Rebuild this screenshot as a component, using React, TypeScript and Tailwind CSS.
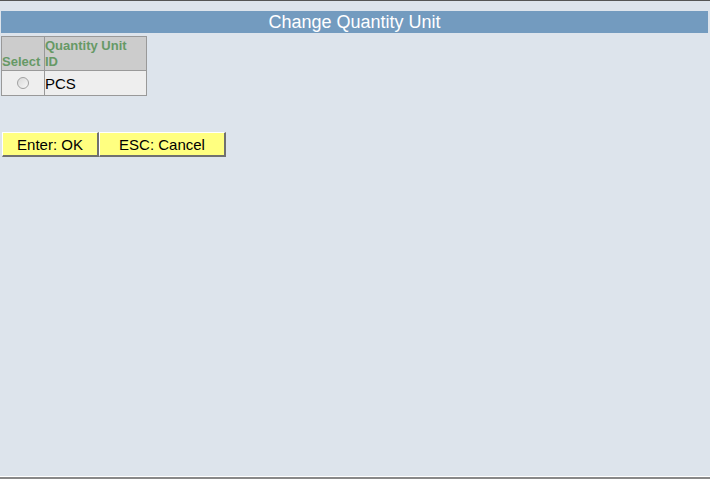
import React from "react";

export default function App() {
  return (
    <div
      className="flex h-[479px] w-[710px] flex-col bg-[#dde4ec] text-black"
      style={{ fontFamily: '"Liberation Sans", Arial, sans-serif' }}
    >
      <div className="h-px w-full bg-[#555555]" />
      <div className="flex flex-1 flex-col pl-px pr-[2px] pt-[10px]">
        <div className="flex h-[22px] w-full items-center justify-center bg-[#739bbf] text-[18px] leading-none text-white">
          Change Quantity Unit
        </div>
        <table className="mt-[3px] w-[146px] border-collapse border border-[#999999] text-left">
          <thead>
            <tr className="h-[34px] bg-[#cccccc]">
              <th className="w-[43px] border border-[#999999] p-0 align-bottom text-[13px] font-bold leading-[16px] text-[#669966]">
                Select
              </th>
              <th className="border border-[#999999] p-0 align-bottom text-[13px] font-bold leading-[16px] text-[#669966]">
                Quantity Unit
                <br />
                ID
              </th>
            </tr>
          </thead>
          <tbody>
            <tr className="h-[23px] bg-[#eeeeee]">
              <td className="border border-[#999999] p-0 text-center">
                <span className="inline-block h-[12px] w-[12px] translate-y-[1px] rounded-full border border-[#a0a0a0] bg-gradient-to-br from-[#d8d8d8] to-[#f8f8f8]" />
              </td>
              <td className="border border-[#999999] p-0 text-[15px] leading-none">PCS</td>
            </tr>
          </tbody>
        </table>
        <div className="mt-[36px] flex pl-px">
          <button className="h-[25px] w-[97px] border border-b-2 border-r-2 border-b-[#707070] border-l-white border-r-[#707070] border-t-white bg-[#ffff80] text-[15px] leading-none text-black">
            Enter: OK
          </button>
          <button className="h-[25px] w-[127px] border border-b-2 border-r-2 border-b-[#707070] border-l-white border-r-[#707070] border-t-white bg-[#ffff80] text-[15px] leading-none text-black">
            ESC: Cancel
          </button>
        </div>
      </div>
      <div className="h-px w-full bg-white" />
      <div className="h-[2px] w-full bg-[#888888]" />
    </div>
  );
}
